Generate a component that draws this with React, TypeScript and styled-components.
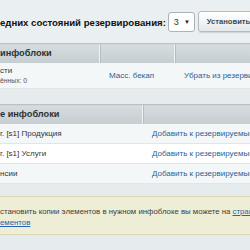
import React from "react";
import styled, { createGlobalStyle } from "styled-components";

const Global = createGlobalStyle`
  html, body { margin: 0; padding: 0; background: #e6ecee; }
  body { font-family: "Liberation Sans", Arial, sans-serif; }
`;

const Page = styled.div`
  width: 250px;
  height: 250px;
  overflow: hidden;
  background: #e6ecee;
`;

const Inner = styled.div`
  width: 330px;
`;

const TopBar = styled.div`
  display: flex;
  align-items: center;
  height: 43px;
  white-space: nowrap;
  background: #eaeff1;
`;

const Title = styled.span`
  font-size: 9.6px;
  font-weight: bold;
  color: #111;
  margin-top: 1px;
`;

const Select = styled.div`
  display: flex;
  align-items: center;
  justify-content: space-between;
  box-sizing: border-box;
  width: 27px;
  height: 20px;
  margin-left: 2px;
  padding: 0 4px 0 5px;
  background: #fff;
  border: 1px solid #aab4b8;
  border-radius: 3px;
  font-size: 9px;
  color: #333;
`;

const Arrow = styled.span`
  font-size: 6px;
  color: #222;
`;

const Button = styled.div`
  display: flex;
  align-items: center;
  box-sizing: border-box;
  height: 21px;
  margin-left: 3px;
  padding: 0 8px;
  background: linear-gradient(#ffffff, #e4e9eb);
  border: 1px solid #b3bcc0;
  border-radius: 3px;
  box-shadow: 0 1px 1px rgba(0,0,0,0.12);
  font-size: 7.6px;
  font-weight: bold;
  color: #3c4a4f;
`;

const Table = styled.table<{ $mb: number }>`
  width: 330px;
  table-layout: fixed;
  border-collapse: collapse;
  font-size: 8px;
  white-space: nowrap;
  margin-bottom: ${(p) => p.$mb}px;
`;

const HeadCell = styled.th<{ $w?: number; $first?: boolean }>`
  box-sizing: border-box;
  width: ${(p) => (p.$w ? `${p.$w}px` : "auto")};
  height: 19px;
  padding: 0 ${(p) => (p.$first ? 0 : 10)}px;
  text-align: left;
  font-size: 9.2px;
  font-weight: bold;
  color: #2b3336;
  background: linear-gradient(#d6dde0, #c4cdd0);
  border-top: 1px solid #b9c3c6;
  border-left: ${(p) => (p.$first ? "none" : "1px solid #eef2f3")};
  box-shadow: ${(p) => (p.$first ? "none" : "inset 1px 0 0 #b4bec2")};
  overflow: hidden;
`;

const Row = styled.tr<{ $alt?: boolean; $h: number }>`
  height: ${(p) => p.$h}px;
  background: ${(p) => (p.$alt ? "#f4f7f8" : "#ffffff")};
  border-bottom: 1px solid #e1e7e9;
`;

const Cell = styled.td<{ $first?: boolean }>`
  box-sizing: border-box;
  padding: 0 ${(p) => (p.$first ? 0 : 10)}px;
  color: #333;
  vertical-align: middle;
  overflow: hidden;
`;

const Sub = styled.div`
  font-size: 6.8px;
  color: #555;
  margin-top: 2px;
`;

const Link = styled.span`
  color: #2b5f96;
`;

const Note = styled.div`
  box-sizing: border-box;
  height: 39px;
  padding: 9px 0 0 0;
  background: #eeedd6;
  border-top: 1px solid #d9d7b4;
  border-bottom: 1px solid #d9d7b4;
  font-size: 7.8px;
  line-height: 11px;
  color: #3d3d3d;
  white-space: nowrap;
`;

const NoteLink = styled.span`
  color: #2067b0;
  text-decoration: underline;
`;

export default function App() {
  return (
    <Page>
      <Global />
      <Inner>
        <TopBar>
          <Title>едних состояний резервирования:</Title>
          <Select>
            <span>3</span>
            <Arrow>▼</Arrow>
          </Select>
          <Button>Установить</Button>
        </TopBar>

        <Table $mb={15}>
          <thead>
            <tr>
              <HeadCell $w={99} $first>инфоблоки</HeadCell>
              <HeadCell $w={75}></HeadCell>
              <HeadCell></HeadCell>
            </tr>
          </thead>
          <tbody>
            <Row $alt $h={26}>
              <Cell $first>
                <div>сти</div>
                <Sub>ённых: 0</Sub>
              </Cell>
              <Cell><Link>Масс. бекап</Link></Cell>
              <Cell><Link>Убрать из резервируемых</Link></Cell>
            </Row>
          </tbody>
        </Table>

        <Table $mb={12}>
          <thead>
            <tr>
              <HeadCell $w={142} $first>е инфоблоки</HeadCell>
              <HeadCell></HeadCell>
            </tr>
          </thead>
          <tbody>
            <Row $alt $h={20}>
              <Cell $first>г. [s1] Продукция</Cell>
              <Cell><Link>Добавить к резервируемым</Link></Cell>
            </Row>
            <Row $h={20}>
              <Cell $first>г. [s1] Услуги</Cell>
              <Cell><Link>Добавить к резервируемым</Link></Cell>
            </Row>
            <Row $alt $h={20}>
              <Cell $first>нсии</Cell>
              <Cell><Link>Добавить к резервируемым</Link></Cell>
            </Row>
          </tbody>
        </Table>

        <Note>
          <div>становить копии элементов в нужном инфоблоке вы можете на <NoteLink>странице</NoteLink></div>
          <div><NoteLink>ементов</NoteLink></div>
        </Note>
      </Inner>
    </Page>
  );
}
